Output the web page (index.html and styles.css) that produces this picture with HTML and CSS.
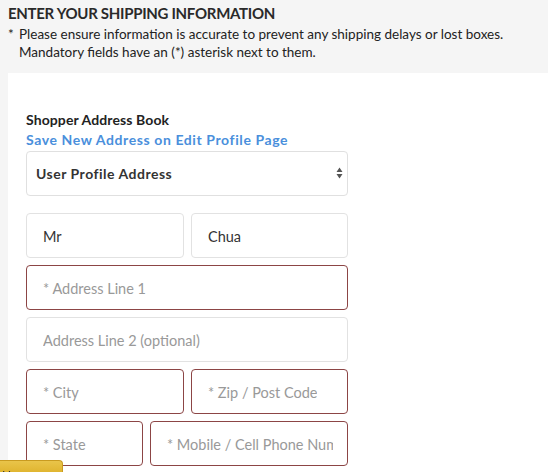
FILE: index.html
```html
<!DOCTYPE html>
<html>
<head>
<meta charset="utf-8">
<link rel="stylesheet" href="styles.css">
</head>
<body>
<div class="header">
  <h1 class="title">ENTER YOUR SHIPPING INFORMATION</h1>
  <p class="note"><span class="star">*</span><span>Please ensure information is accurate to prevent any shipping delays or lost boxes.<br>Mandatory fields have an (*) asterisk next to them.</span></p>
</div>
<div class="panel">
  <div class="form">
    <div class="book-label">Shopper Address Book</div>
    <a class="book-link">Save New Address on Edit Profile Page</a>
    <div class="select">
      <span>User Profile Address</span>
      <svg class="arrows" width="7" height="12" viewBox="0 0 7 12"><path d="M3.5 0.5 L6.5 5 L0.5 5 Z M3.5 11.5 L6.5 7 L0.5 7 Z" fill="#555"/></svg>
    </div>
    <div class="fields">
      <div class="row half">
        <div class="input filled"><span>Mr</span></div>
        <div class="input filled"><span>Chua</span></div>
      </div>
      <div class="row">
        <div class="input req"><span>* Address Line 1</span></div>
      </div>
      <div class="row">
        <div class="input"><span>Address Line 2 (optional)</span></div>
      </div>
      <div class="row half">
        <div class="input req"><span>* City</span></div>
        <div class="input req"><span>* Zip / Post Code</span></div>
      </div>
      <div class="row last">
        <div class="input req"><span>* State</span></div>
        <div class="input req clip"><span>* Mobile / Cell Phone Number</span></div>
      </div>
    </div>
  </div>
</div>
<div class="tab"><span>H</span></div>
</body>
</html>
```
FILE: styles.css
```css
html, body {
  margin: 0;
  padding: 0;
  height: 100%;
  overflow: hidden;
}
body {
  background: #f5f5f5;
  font-family: Lato, "Open Sans", sans-serif;
  color: #333;
}
.header {
  padding: 3px 8px 0 8px;
  height: 69px;
  box-sizing: border-box;
}
.title {
  margin: 0;
  font-size: 15px;
  font-weight: 700;
  color: #2a2a2a;
  line-height: 20px;
  letter-spacing: -0.3px;
}
.note {
  margin: 2px 0 0 0;
  font-size: 13.5px;
  line-height: 18px;
  color: #222;
  display: flex;
}
.note .star {
  width: 11px;
  flex: none;
}
.panel {
  margin-left: 8px;
  margin-top: 4px;
  background: #fff;
  height: 500px;
  padding: 37px 0 0 18px;
  box-sizing: border-box;
}
.form {
  width: 322px;
}
.book-label {
  font-size: 14px;
  font-weight: 700;
  color: #222;
  line-height: 20px;
  letter-spacing: 0.1px;
}
.book-link {
  display: block;
  font-size: 14px;
  font-weight: 700;
  color: #4a8fdc;
  line-height: 20px;
  letter-spacing: 0.6px;
}
.select {
  margin-top: 1px;
  height: 45px;
  box-sizing: border-box;
  border: 1px solid #e0e0e0;
  border-radius: 4px;
  display: flex;
  align-items: center;
  justify-content: space-between;
  padding: 0 4px 1px 9px;
  font-size: 14px;
  font-weight: 700;
  color: #333;
  letter-spacing: 0.5px;
}
.fields {
  margin-top: 17px;
  display: flex;
  flex-direction: column;
  gap: 7px;
}
.row {
  display: grid;
  grid-template-columns: 1fr;
  gap: 7px;
}
.row.half {
  grid-template-columns: 158px 157px;
}
.row.last {
  grid-template-columns: 117px 198px;
}
.input {
  height: 45px;
  box-sizing: border-box;
  border: 1px solid #e2e2e2;
  border-radius: 4px;
  padding: 2px 14px 0 16px;
  display: flex;
  align-items: center;
  font-size: 14.5px;
  color: #999;
  white-space: nowrap;
}
.input span {
  overflow: hidden;
  min-width: 0;
}
.input.filled {
  color: #333;
}
.input.req {
  border-color: #8c4545;
}
.tab {
  position: fixed;
  left: 0;
  bottom: 0;
  width: 62px;
  height: 11px;
  background: linear-gradient(#e9c44a, #e0b530);
  border-top-right-radius: 4px;
  border-top: 1px solid #c99b20;
  border-right: 1px solid #c99b20;
  overflow: hidden;
  font-size: 12px;
  color: #333;
}
.tab span {
  display: block;
  padding: 6px 0 0 2px;
}
```
